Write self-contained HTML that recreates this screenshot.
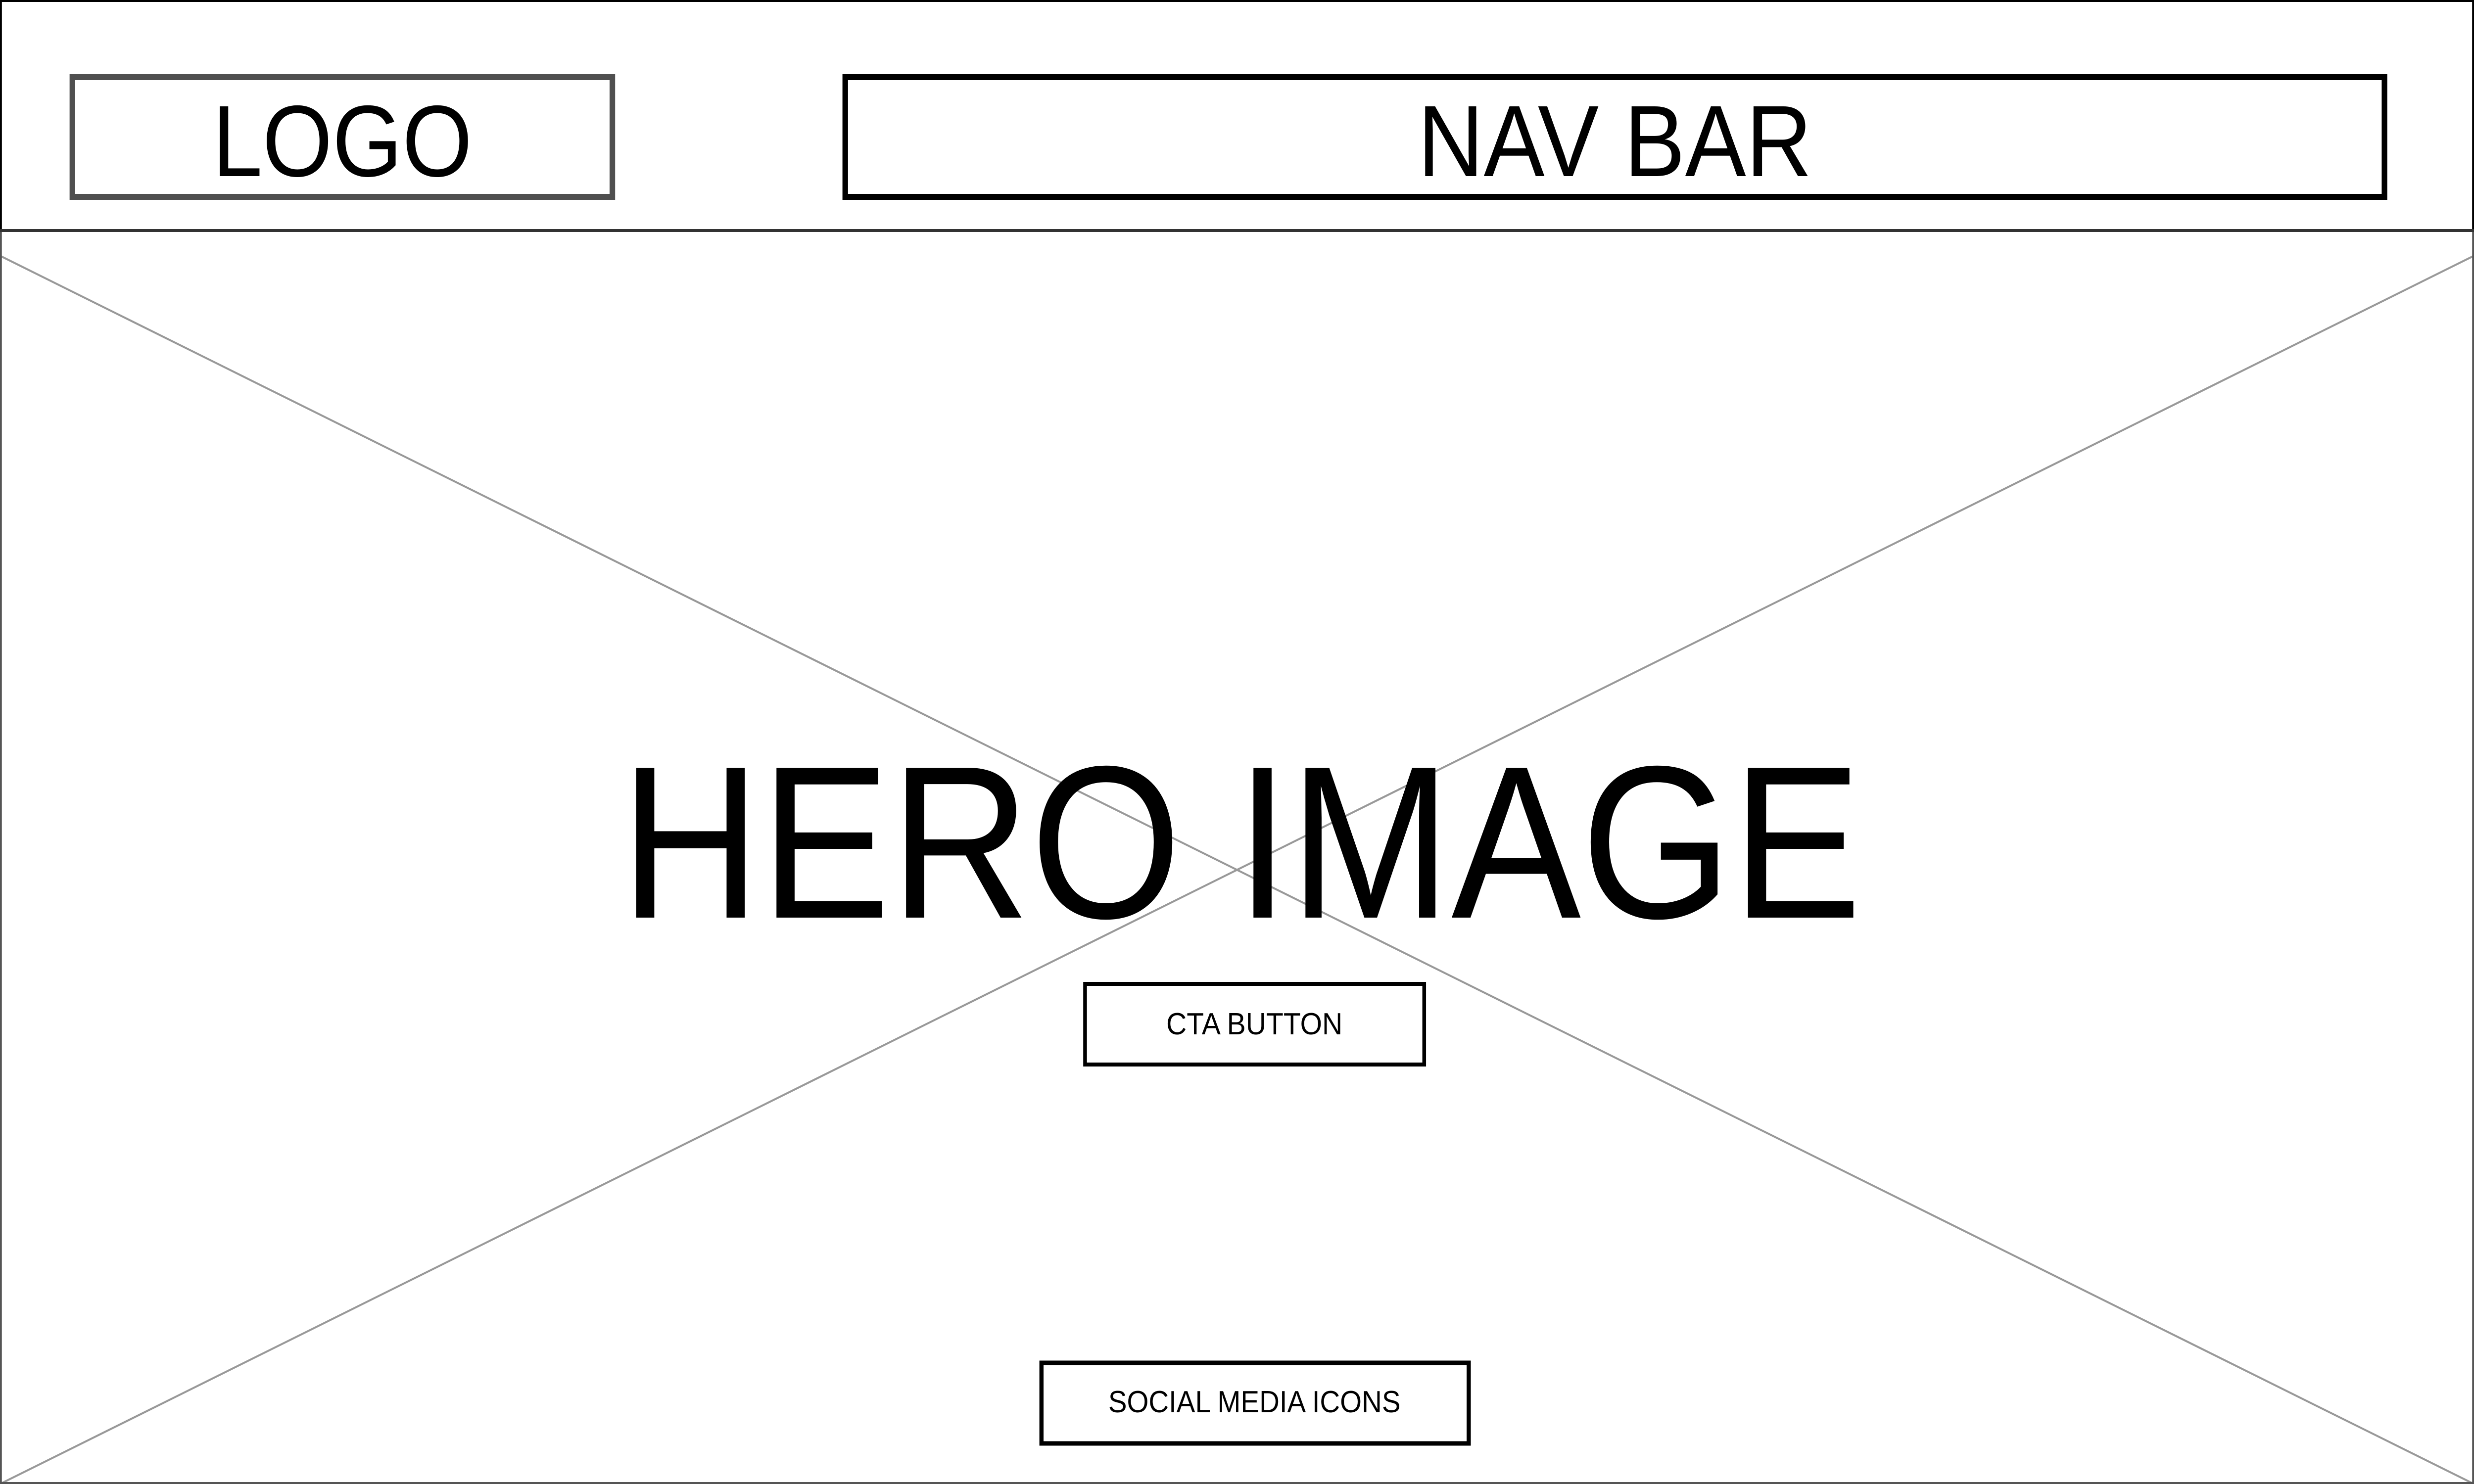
<!DOCTYPE html>
<html><head><meta charset="utf-8"><style>
html,body{margin:0;padding:0;background:#fff;width:100%;height:100%;overflow:hidden;}
svg{display:block;width:100vw;height:100vh;}
text{font-family:"Liberation Sans",sans-serif;fill:#000;}
</style></head><body>
<svg viewBox="0 0 5333 3000" preserveAspectRatio="none" xmlns="http://www.w3.org/2000/svg">
<rect x="0" y="0" width="5333" height="3000" fill="#fff"/>
<line x1="0" y1="517" x2="5333" y2="3000" stroke="#999" stroke-width="4"/>
<line x1="5333" y1="517" x2="0" y2="3000" stroke="#999" stroke-width="4"/>
<rect x="2" y="2" width="5329" height="2996" fill="none" stroke="#555" stroke-width="4"/>
<rect x="2" y="2" width="5329" height="464" fill="none" stroke="#000" stroke-width="4"/>
<line x1="0" y1="466" x2="5333" y2="466" stroke="#333" stroke-width="6"/>
<rect x="156" y="156" width="1164" height="242" fill="none" stroke="#4f4f4f" stroke-width="12"/>
<rect x="1822" y="156" width="3318" height="242" fill="none" stroke="#000" stroke-width="12"/>
<text x="738" y="356" font-size="205" text-anchor="middle" textLength="560" lengthAdjust="spacingAndGlyphs">LOGO</text>
<text x="3481" y="356" font-size="205" text-anchor="middle" textLength="850" lengthAdjust="spacingAndGlyphs">NAV BAR</text>
<text x="2675" y="1855" font-size="440" text-anchor="middle" textLength="2676" lengthAdjust="spacingAndGlyphs">HERO IMAGE</text>
<rect x="2339" y="1989" width="731" height="163" fill="none" stroke="#000" stroke-width="8"/>
<text x="2704" y="2091" font-size="62" text-anchor="middle" textLength="380" lengthAdjust="spacingAndGlyphs">CTA BUTTON</text>
<rect x="2245" y="2755" width="921" height="163" fill="none" stroke="#000" stroke-width="9"/>
<text x="2704" y="2855" font-size="62" text-anchor="middle" textLength="630" lengthAdjust="spacingAndGlyphs">SOCIAL MEDIA ICONS</text>
</svg>
</body></html>
